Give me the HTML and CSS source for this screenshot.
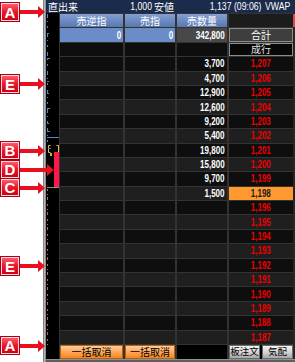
FILE: index.html
```html
<!DOCTYPE html>
<html lang="ja">
<head>
<meta charset="utf-8">
<title>板</title>
<link rel="stylesheet" href="styles.css">
</head>
<body>
<div class="app">
  <div class="gutter"></div>
  <div class="frame-line"></div>
  <div class="board">
    <div class="topbar">
      <span class="tb-label">直出来</span>
      <span class="tb-num"><span class="tn">1,000</span></span>
      <span class="tb-jp">安値</span>
      <span class="tb-time"><span class="tn">1,137 (09:06)</span></span>
      <span class="tb-vwap"><span class="tn tl">VWAP</span></span>
    </div>
    <div class="middle">
      <svg class="strip" width="13" height="346" viewBox="0 0 13 346">
        <line x1="1.5" y1="1" x2="1.5" y2="133" stroke="#4a8ad8" stroke-width="1" stroke-dasharray="4 3 1 4 2 5"/>
        <line x1="1" y1="20.5" x2="3" y2="20.5" stroke="#4a8ad8"/>
        <line x1="1" y1="45.5" x2="4" y2="45.5" stroke="#4a8ad8"/>
        <line x1="1" y1="68.5" x2="3" y2="68.5" stroke="#4a8ad8"/>
        <line x1="1" y1="80.5" x2="3" y2="80.5" stroke="#4a8ad8"/>
        <line x1="1" y1="95.5" x2="4" y2="95.5" stroke="#4a8ad8"/>
        <line x1="1" y1="110.5" x2="3" y2="110.5" stroke="#4a8ad8"/>
        <line x1="1" y1="118.5" x2="4" y2="118.5" stroke="#4a8ad8"/>
        <line x1="1" y1="124.5" x2="13" y2="124.5" stroke="#4a8ad8"/>
        <path d="M4.5 132.5 H2.5 V139.5 H4.5" fill="none" stroke="#d8c448"/>
        <path d="M10.5 132.5 H12.5 V140.5 H10.5" fill="none" stroke="#d8c448"/>
        <line x1="2" y1="135.5" x2="5" y2="135.5" stroke="#4a8ad8"/>
        <rect x="4" y="140" width="2" height="3" fill="#c8b040"/>
        <rect x="8" y="139" width="5" height="35" fill="#ff1848"/>
        <line x1="1" y1="174.5" x2="13" y2="174.5" stroke="#8c8c8c"/>
        <line x1="1.5" y1="176" x2="1.5" y2="332" stroke="#b86a6a" stroke-width="1" stroke-dasharray="2 3 1 2 3 4"/>
      </svg>
      <div class="grid">
        <div class="cell colhead">売逆指</div>
        <div class="cell colhead">売指</div>
        <div class="cell colhead">売数量</div>
        <div class="cell blank"></div>

        <div class="cell val"><span class="n">0</span></div>
        <div class="cell val"><span class="n">0</span></div>
        <div class="cell total"><span class="n">342,800</span></div>
        <div class="cell btn-total">合計</div>

        <div class="cell d"></div>
        <div class="cell d"></div>
        <div class="cell d"></div>
        <div class="cell btn-market">成行</div>

        <div class="cell d"></div><div class="cell d"></div><div class="cell d qty"><span class="n">3,700</span></div><div class="cell d px"><span class="n">1,207</span></div>
        <div class="cell l"></div><div class="cell l"></div><div class="cell l qty"><span class="n">4,700</span></div><div class="cell l px"><span class="n">1,206</span></div>
        <div class="cell d"></div><div class="cell d"></div><div class="cell d qty"><span class="n">12,900</span></div><div class="cell d px"><span class="n">1,205</span></div>
        <div class="cell l"></div><div class="cell l"></div><div class="cell l qty"><span class="n">12,600</span></div><div class="cell l px"><span class="n">1,204</span></div>
        <div class="cell d"></div><div class="cell d"></div><div class="cell d qty"><span class="n">9,200</span></div><div class="cell d px"><span class="n">1,203</span></div>
        <div class="cell l"></div><div class="cell l"></div><div class="cell l qty"><span class="n">5,400</span></div><div class="cell l px"><span class="n">1,202</span></div>
        <div class="cell d"></div><div class="cell d"></div><div class="cell d qty"><span class="n">19,800</span></div><div class="cell d px"><span class="n">1,201</span></div>
        <div class="cell l"></div><div class="cell l"></div><div class="cell l qty"><span class="n">15,800</span></div><div class="cell l px"><span class="n">1,200</span></div>
        <div class="cell d"></div><div class="cell d"></div><div class="cell d qty"><span class="n">9,700</span></div><div class="cell d px"><span class="n">1,199</span></div>
        <div class="cell l"></div><div class="cell l"></div><div class="cell l qty"><span class="n">1,500</span></div><div class="cell cur"><span class="n">1,198</span></div>
        <div class="cell d"></div><div class="cell d"></div><div class="cell d"></div><div class="cell d px"><span class="n">1,196</span></div>
        <div class="cell l"></div><div class="cell l"></div><div class="cell l"></div><div class="cell l px"><span class="n">1,195</span></div>
        <div class="cell d"></div><div class="cell d"></div><div class="cell d"></div><div class="cell d px"><span class="n">1,194</span></div>
        <div class="cell l"></div><div class="cell l"></div><div class="cell l"></div><div class="cell l px"><span class="n">1,193</span></div>
        <div class="cell d"></div><div class="cell d"></div><div class="cell d"></div><div class="cell d px"><span class="n">1,192</span></div>
        <div class="cell l"></div><div class="cell l"></div><div class="cell l"></div><div class="cell l px"><span class="n">1,191</span></div>
        <div class="cell d"></div><div class="cell d"></div><div class="cell d"></div><div class="cell d px"><span class="n">1,190</span></div>
        <div class="cell l"></div><div class="cell l"></div><div class="cell l"></div><div class="cell l px"><span class="n">1,189</span></div>
        <div class="cell d"></div><div class="cell d"></div><div class="cell d"></div><div class="cell d px"><span class="n">1,188</span></div>
        <div class="cell l"></div><div class="cell l"></div><div class="cell l"></div><div class="cell l px"><span class="n">1,187</span></div>

        <div class="cell obtn">一括取消</div>
        <div class="cell obtn">一括取消</div>
        <div class="cell black"></div>
        <div class="cell pair"><span class="gbtn">板注文</span><span class="gbtn">気配</span></div>
      </div>
      <div class="edge"><div class="edge-red"></div></div>
    </div>
    <div class="foot-line"></div>
  </div>
</div>

<div class="callout co-a1"><span class="tag">A</span><span class="shaft"></span><span class="arrowhead"></span></div>
<div class="callout co-e1"><span class="tag">E</span><span class="shaft"></span><span class="arrowhead"></span></div>
<div class="callout co-b"><span class="tag sm">B</span><span class="shaft"></span><span class="arrowhead"></span></div>
<div class="callout co-d"><span class="tag sm">D</span><span class="shaft long"></span><span class="arrowhead"></span></div>
<div class="callout co-c"><span class="tag sm">C</span><span class="shaft"></span><span class="arrowhead"></span></div>
<div class="callout co-e2"><span class="tag">E</span><span class="shaft"></span><span class="arrowhead"></span></div>
<div class="callout co-a2"><span class="tag sm">A</span><span class="shaft"></span><span class="arrowhead"></span></div>
</body>
</html>
```

FILE: styles.css
```css
* { box-sizing: border-box; }
html, body { margin: 0; padding: 0; }
body {
  width: 295px;
  height: 362px;
  overflow: hidden;
  background: #fff;
  position: relative;
  font-family: "Liberation Sans", "Noto Sans CJK JP", sans-serif;
}

.app { display: flex; height: 362px; }
.gutter { width: 43px; flex: none; }
.frame-line {
  width: 3px;
  flex: none;
  background: linear-gradient(to right, #6a6a6a, #b4b4b4 50%, #7a7a7a);
}
.board {
  width: 249px;
  flex: none;
  display: flex;
  flex-direction: column;
  background: #000;
}

/* top bar */
.topbar {
  height: 13px;
  display: flex;
  align-items: center;
  background: #1b2b4c;
  color: #fff;
  font-size: 10px;
  line-height: 13px;
  white-space: nowrap;
  overflow: hidden;
}
.tb-label { flex: 1; padding-left: 2px; font-family: "Noto Sans CJK JP", sans-serif; }
.tb-num { width: 40px; display: flex; justify-content: flex-end; }
.tb-jp { width: 22px; padding-left: 2px; font-family: "Noto Sans CJK JP", sans-serif; }
.tb-time { width: 87px; display: flex; justify-content: flex-end; }
.tb-vwap { width: 34px; padding-left: 4px; display: flex; }
.tn {
  display: inline-block;
  font-family: "Liberation Sans", sans-serif;
  font-size: 10px;
  transform: scaleX(0.87);
  transform-origin: right center;
}
.tn.tl { transform-origin: left center; }

/* middle */
.middle { display: flex; height: 346px; }
.strip { width: 13px; height: 346px; flex: none; display: block; background: #000; }
.grid {
  width: 234px;
  flex: none;
  display: grid;
  grid-template-columns: 63px 50px 50px 64px;
  grid-template-rows: repeat(23, 13.4px) 14px;
  column-gap: 2px;
  row-gap: 1px;
  padding: 1px 0 0 1px;
  background: #333;
}
.edge { width: 2px; flex: none; background: #262626; }
.edge-red { margin-top: 1px; height: 13.4px; background: #e04848; }
.foot-line { height: 3px; background: #5e5e5e; border-top: 1px solid #909090; }

/* cells */
.cell {
  display: flex;
  align-items: center;
  font-size: 10px;
  line-height: 1;
  overflow: hidden;
  white-space: nowrap;
}
.n {
  display: inline-block;
  font-family: "Liberation Sans", sans-serif;
  font-size: 11px;
  line-height: 1;
  transform: scaleX(0.73);
  transform-origin: right center;
}
.colhead {
  justify-content: center;
  color: #fff;
  background: linear-gradient(#839fd3, #5878b0);
  font-family: "Noto Sans CJK JP", sans-serif;
}
.blank { background: #1c1c1c; }
.val {
  justify-content: flex-end;
  padding-right: 2px;
  background: #6b8cc6;
  color: #fff;
  font-weight: bold;
}
.total {
  justify-content: flex-end;
  padding-right: 2px;
  background: #484848;
  color: #fff;
  font-weight: bold;
}
.btn-total {
  justify-content: center;
  border: 1px solid #8c8c8c;
  background: #3e3e3e;
  color: #fff;
  font-family: "Noto Sans CJK JP", sans-serif;
}
.btn-market {
  justify-content: center;
  border: 1px solid #8c8c8c;
  background: #080808;
  color: #e0e0e0;
  font-family: "Noto Sans CJK JP", sans-serif;
}
.d { background: #0e0e0e; }
.l { background: #1f1f1f; }
.qty {
  justify-content: flex-end;
  padding-right: 2px;
  color: #fff;
  font-weight: bold;
}
.px {
  justify-content: center;
  color: #ec0000;
  font-weight: bold;
}
.px .n, .cur .n { transform-origin: center center; }
.cur {
  justify-content: center;
  background: #ff9a30;
  color: #1a1a1a;
  font-weight: bold;
}
.obtn {
  justify-content: center;
  border: 1px solid #b86010;
  background: linear-gradient(#ffcc98, #ffa452 55%, #f08424);
  color: #000;
  font-family: "Noto Sans CJK JP", sans-serif;
}
.black { background: #000; }
.pair { background: #000; gap: 2px; align-items: stretch; }
.gbtn {
  flex: 1;
  display: flex;
  align-items: center;
  justify-content: center;
  border: 1px solid #6a6a6a;
  background: linear-gradient(#f6f6f6, #d0d0d0 55%, #a8a8a8);
  color: #000;
  font-size: 9.5px;
  font-family: "Noto Sans CJK JP", sans-serif;
}

/* annotation callouts (overlay) */
.callout {
  position: absolute;
  left: 0;
  display: flex;
  align-items: center;
}
.co-a1 { top: 2px; }
.co-e1 { top: 74px; }
.co-b { top: 141px; }
.co-d { top: 160px; }
.co-c { top: 178px; }
.co-e2 { top: 256px; }
.co-a2 { top: 336px; }
.tag {
  width: 20px;
  height: 20px;
  flex: none;
  display: flex;
  align-items: center;
  justify-content: center;
  border: 1px solid #a8001a;
  box-shadow: inset 0 0 0 1px #ffd8dc;
  background: linear-gradient(#ff6470, #e8182a 50%, #c8000f);
  color: #fff;
  font: bold 15px/1 "Liberation Sans", sans-serif;
}
.tag.sm { height: 19px; }
.shaft { width: 18px; height: 4px; background: #e8101e; flex: none; }
.shaft.long { width: 27px; }
.arrowhead {
  width: 0;
  height: 0;
  flex: none;
  border-left: 7px solid #e8101e;
  border-top: 6px solid transparent;
  border-bottom: 6px solid transparent;
}
```
